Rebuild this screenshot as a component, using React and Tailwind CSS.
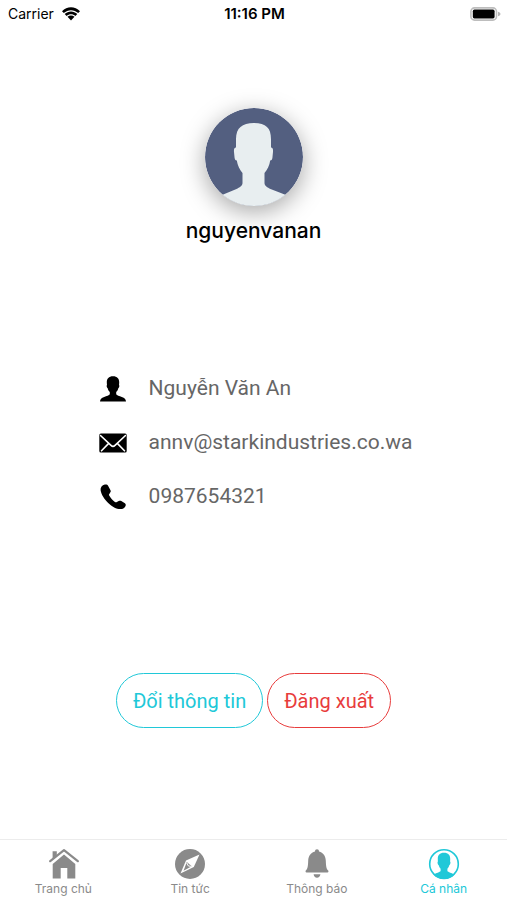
import { useState } from 'react';

const contactInfo = [
  { id: 'name', label: 'Nguyễn Văn An', icon: PersonIcon },
  { id: 'email', label: 'annv@starkindustries.co.wa', icon: MailIcon },
  { id: 'phone', label: '0987654321', icon: PhoneIcon },
];

const tabs = [
  { id: 'home', label: 'Trang chủ', icon: HomeIcon },
  { id: 'news', label: 'Tin tức', icon: CompassIcon },
  { id: 'notifications', label: 'Thông báo', icon: BellIcon },
  { id: 'profile', label: 'Cá nhân', icon: ProfileIcon },
];

function WifiIcon() {
  return (
    <svg viewBox="0 0 18 14" className="w-[18px] h-[14px]" fill="currentColor" aria-hidden="true">
      <path d="M0 4.300C5-1.100 13-1.100 18 4.300L16.200 6.100C12.200 2.200 5.800 2.200 1.800 6.100Z" />
      <path d="M2.700 7C6.200 3.500 11.800 3.500 15.300 7L13.400 8.900C10.900 6.600 7.100 6.600 4.600 8.900Z" />
      <path d="M5.500 9.800C7.500 8 10.500 8 12.500 9.800L9 13.400Z" />
    </svg>
  );
}

function BatteryIcon() {
  return (
    <svg viewBox="0 0 31 14" className="w-[31px] h-[14px]" aria-hidden="true">
      <rect x="0.9" y="0.9" width="25.600" height="12.200" rx="3.600" fill="#fff" stroke="#bdbdbd" strokeWidth="1.600" />
      <rect x="2.800" y="2.600" width="21.800" height="8.800" rx="1.600" fill="#000" />
      <path d="M28 4.800c2 .5 2.400 1.300 2.400 2.200s-.4 1.700-2.400 2.200z" fill="#b4b4b4" />
    </svg>
  );
}

function Avatar() {
  return (
    <div className="w-[98px] h-[98px] rounded-full shadow-[0_6px_24px_rgba(0,0,0,0.35)]">
      <svg viewBox="0 0 98 98" className="w-full h-full rounded-full" role="img" aria-label="Avatar">
        <circle cx="49" cy="49" r="49" fill="#535f80" />
        <path
          d="M49 15c-12 0-18 5-18 16v8.500c-2 0-2.200 2-2 4.500l.6 6c.3 1.700 1 2.500 2.200 2.500.8 5 2.700 9 5.700 12.500V75c0 3-3 4.500-6 6L17 87A49 49 0 0 0 81 87L65.500 81c-3-1.500-6-3-6-6V65c3-3.500 5-7.500 5.700-12.500 1.200 0 1.900-.8 2.200-2.500l.6-6c.2-2.500 0-4.500-2-4.500V31c0-11-5-16-17-16z"
          fill="#e8eef0"
        />
      </svg>
    </div>
  );
}

function PersonIcon() {
  return (
    <svg viewBox="0 0 28 28" className="w-7 h-7" fill="currentColor" aria-hidden="true">
      <path d="M14 1.200c-4.200 0-6.200 2.400-6.200 6 0 1.300.1 2.100.2 2.800-.6.300-.4 2.600.7 3.300.4 1.700 1.100 2.900 2.100 3.800v2.200c-.6 1.200-3.200 1.700-5.600 2.600C2.300 22.900 1.200 24.200 1 26.500h26c-.2-2.300-1.300-3.600-4.200-4.600-2.400-.9-5-1.400-5.600-2.600v-2.200c1-.9 1.700-2.100 2.100-3.800 1.100-.7 1.300-3 .7-3.300.1-.7.2-1.500.2-2.800 0-3.600-2-6-6.200-6z" />
    </svg>
  );
}

function MailIcon() {
  return (
    <svg viewBox="0 0 28 28" className="w-7 h-7" aria-hidden="true">
      <rect x="0.300" y="4.600" width="27.400" height="19" rx="1.600" fill="currentColor" />
      <path
        d="M1.500 6.500 12 16.400c1.300 1.200 2.700 1.200 4 0L26.500 6.500M2.500 21.800l6.700-6.900M25.500 21.800l-6.700-6.900"
        fill="none"
        stroke="#fff"
        strokeWidth="1.600"
        strokeLinecap="round"
      />
    </svg>
  );
}

function PhoneIcon() {
  return (
    <svg viewBox="0 0 28 28" className="w-7 h-7" fill="currentColor" aria-hidden="true">
      <path d="M5.800 1.500C3 2.100 1.300 4.200 1.600 7.200c.6 4.200 3.800 9 7.600 12.700 3.700 3.500 8.300 6.200 12 6.200 2.700 0 5-1.300 5.500-3.700.2-.9-.1-1.500-.8-2.100l-3.600-2.200c-.9-.5-1.700-.5-2.600 0l-1.800 1c-.7.400-1.300.3-2-.2-2.500-1.700-4.300-3.700-5.700-6.300-.4-.7-.3-1.200.3-1.800l.7-1.200c.6-.7.7-1.400.3-2.300L9.200 2.900c-.6-1.300-1.900-1.700-3.400-1.400z" />
    </svg>
  );
}

function HomeIcon() {
  return (
    <svg viewBox="0 0 32 32" className="w-8 h-8" aria-hidden="true">
      <path d="M5.600 3.200h4.200v4.200l-4.200 3.600z" fill="currentColor" />
      <path d="M17 6.500 5.700 16V30.500h8V20h6.600v10.500h8V16z" fill="currentColor" />
      <path d="M3.200 13.200 17 2.200 30.800 13.200" fill="none" stroke="currentColor" strokeWidth="2.200" strokeLinecap="round" strokeLinejoin="round" />
    </svg>
  );
}

function CompassIcon() {
  return (
    <svg viewBox="0 0 32 32" className="w-8 h-8" aria-hidden="true">
      <circle cx="16" cy="16" r="15" fill="currentColor" />
      <path d="M25.500 6.500 19.800 19 6.500 25.500 12 12.500z" fill="#fff" />
      <path d="M12.800 14 17.800 18.300l-8.300 4.500z" fill="currentColor" />
      <path d="m12.800 15 1.600 3 3.200.4" fill="none" stroke="#fff" strokeWidth="1" />
    </svg>
  );
}

function BellIcon() {
  return (
    <svg viewBox="0 0 32 32" className="w-8 h-8" fill="currentColor" aria-hidden="true">
      <path d="M16 1.200c-1.200 0-2 .9-2 2.300-4.300 1.100-6.600 4.500-6.800 9.300-.2 6.200-.8 8.300-2.400 9.800-.5.500-.3 2 .7 2h21c1 0 1.200-1.500.7-2-1.600-1.500-2.200-3.600-2.400-9.800-.2-4.800-2.500-8.200-6.800-9.300 0-1.400-.8-2.300-2-2.300z" />
      <path d="M12.600 26.200h6.800c-.3 2.200-1.500 3.500-3.400 3.500s-3.100-1.300-3.400-3.500z" />
    </svg>
  );
}

function ProfileIcon() {
  return (
    <svg viewBox="0 0 32 32" className="w-8 h-8" aria-hidden="true">
      <circle cx="16" cy="16" r="14.300" fill="none" stroke="currentColor" strokeWidth="1.600" />
      <path
        d="M16 4.800c-4.500 0-6.300 2.500-6.200 6.400l.1 2.200c-.7.500-.4 3 .8 3.800.4 1.500 1 2.700 1.900 3.500v2.200c-.8 1.300-4.300 1.800-7.200 3.700A14.500 14.500 0 0 0 26.600 26.600c-2.900-1.900-6.400-2.400-7.200-3.700v-2.200c.9-.8 1.500-2 1.900-3.500 1.200-.8 1.500-3.300.8-3.800l.1-2.200c.1-3.900-1.700-6.400-6.200-6.400z"
        fill="currentColor"
      />
    </svg>
  );
}

function StatusBar() {
  return (
    <header className="grid grid-cols-3 items-center h-7 pl-2 pr-[6px] text-sm text-black">
      <div className="flex items-center gap-2">
        <span>Carrier</span>
        <WifiIcon />
      </div>
      <span className="text-center text-[15px] font-semibold">11:16 PM</span>
      <div className="flex justify-end">
        <BatteryIcon />
      </div>
    </header>
  );
}

export default function App() {
  const [activeTab, setActiveTab] = useState('profile');

  return (
    <div className="min-h-screen flex flex-col bg-white font-['Inter','Noto_Sans',sans-serif]">
      <StatusBar />

      <main className="flex-1 flex flex-col items-center pt-20">
        {/* Avatar & username */}
        <Avatar />
        <h1 className="mt-[9px] text-[21px] leading-8 font-medium text-black">nguyenvanan</h1>

        {/* Contact info */}
        <ul className="mt-[126px] pl-1 flex flex-col gap-[22px]">
          {contactInfo.map(({ id, label, icon: Icon }) => (
            <li key={id} className="flex items-center gap-[22px] h-8 text-[21px] text-[#666] font-['Roboto','Noto_Sans',sans-serif]">
              <span className="text-black">
                <Icon />
              </span>
              {label}
            </li>
          ))}
        </ul>

        {/* Actions */}
        <div className="mt-40 mb-24 flex gap-1 text-xl font-['Roboto','Noto_Sans',sans-serif]">
          <button
            type="button"
            className="h-[55px] px-4 rounded-full border border-[#20c8d8] text-[#20c8d8] cursor-pointer"
          >
            Đổi thông tin
          </button>
          <button
            type="button"
            className="h-[55px] px-4 rounded-full border border-[#e83c3c] text-[#e83c3c] cursor-pointer"
          >
            Đăng xuất
          </button>
        </div>
      </main>

      {/* Bottom tabs */}
      <nav className="grid grid-cols-4 border-t border-[#ececec] pt-2 pb-[2px]">
        {tabs.map(({ id, label, icon: Icon }) => (
          <button
            key={id}
            type="button"
            onClick={() => setActiveTab(id)}
            className={`flex flex-col items-center cursor-pointer ${
              activeTab === id ? 'text-[#20c8d8]' : 'text-[#8a8a8a]'
            }`}
          >
            <Icon />
            <span className="text-xs leading-[18px]">{label}</span>
          </button>
        ))}
      </nav>
    </div>
  );
}
